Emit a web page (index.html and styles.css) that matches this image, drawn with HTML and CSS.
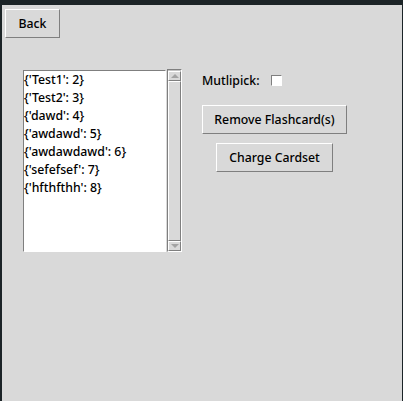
FILE: index.html
```html
<!DOCTYPE html>
<html>
<head>
<meta charset="utf-8">
<link rel="stylesheet" href="styles.css">
</head>
<body>
<div class="window">
  <div class="app">
    <button class="btn back">Back</button>
    <div class="main">
      <div class="listframe">
        <ul class="listbox">
          <li>{'Test1': 2}</li>
          <li>{'Test2': 3}</li>
          <li>{'dawd': 4}</li>
          <li>{'awdawd': 5}</li>
          <li>{'awdawdawd': 6}</li>
          <li>{'sefefsef': 7}</li>
          <li>{'hfthfthh': 8}</li>
        </ul>
        <div class="scrollbar">
          <div class="arrow up"><span class="tri tri-up"></span></div>
          <div class="slider"></div>
          <div class="arrow down"><span class="tri tri-down"></span></div>
        </div>
      </div>
      <div class="side">
        <div class="multi"><span class="label">Mutlipick:</span><span class="check"></span></div>
        <button class="btn remove">Remove Flashcard(s)</button>
        <button class="btn charge">Charge Cardset</button>
      </div>
    </div>
  </div>
</div>
</body>
</html>
```
FILE: styles.css
```css
html, body {
  margin: 0;
  padding: 0;
  background: #1c2427;
  width: 403px;
  height: 401px;
  overflow: hidden;
}
.window {
  padding: 5px 1px 0 2px;
}
.app {
  background: #d9d9d9;
  height: 396px;
  display: flex;
  flex-direction: column;
  align-items: flex-start;
  font-family: "Noto Sans", sans-serif;
  font-size: 12.3px;
  font-weight: 500;
  color: #000;
}
.btn {
  font-family: "Noto Sans", sans-serif;
  font-size: 12.3px;
  font-weight: 500;
  color: #000;
  background: #d9d9d9;
  border: 1px solid;
  border-color: #ffffff #7f7f7f #7f7f7f #ffffff;
  padding: 0;
  margin: 0;
  height: 29px;
  line-height: 27px;
  box-sizing: border-box;
}
.back {
  margin: 4px 0 0 3px;
  width: 55px;
}
.main {
  display: flex;
  margin: 32px 0 0 21px;
}
.listframe {
  display: flex;
}
.listbox {
  list-style: none;
  margin: 0;
  padding: 0;
  width: 143px;
  height: 182px;
  box-sizing: border-box;
  background: #fff;
  border: 1px solid;
  border-color: #7f7f7f #ffffff #ffffff #7f7f7f;
}
.listbox li {
  height: 18px;
  line-height: 18px;
  white-space: nowrap;
}
.scrollbar {
  width: 15px;
  height: 183px;
  margin: -1px 0 0 1px;
  box-sizing: border-box;
  border: 1px solid;
  border-color: #7f7f7f #ffffff #ffffff #7f7f7f;
  background: #c3c3c3;
  display: flex;
  flex-direction: column;
  padding: 1px 0 0 0;
}
.arrow, .slider {
  background: #d9d9d9;
  border: 1px solid;
  border-color: #ffffff #7f7f7f #7f7f7f #ffffff;
  box-sizing: border-box;
}
.arrow {
  height: 10px;
  display: flex;
  align-items: center;
  justify-content: center;
}
.slider {
  flex: 1;
}
.tri {
  width: 0;
  height: 0;
  border-left: 4px solid transparent;
  border-right: 4px solid transparent;
}
.tri-up {
  border-bottom: 4px solid #a3a3a3;
}
.tri-down {
  border-top: 4px solid #a3a3a3;
}
.side {
  display: flex;
  flex-direction: column;
  align-items: flex-start;
  margin-left: 20px;
}
.multi {
  display: flex;
  align-items: center;
  height: 18px;
  margin: 1px 0 0 0;
}
.check {
  width: 11px;
  height: 11px;
  box-sizing: border-box;
  background: #fff;
  border: 1px solid;
  border-color: #7f7f7f #ffffff #ffffff #7f7f7f;
  margin-left: 11px;
}
.remove {
  margin-top: 16px;
  width: 145px;
}
.charge {
  margin: 9px 0 0 14px;
  width: 117px;
}
```
